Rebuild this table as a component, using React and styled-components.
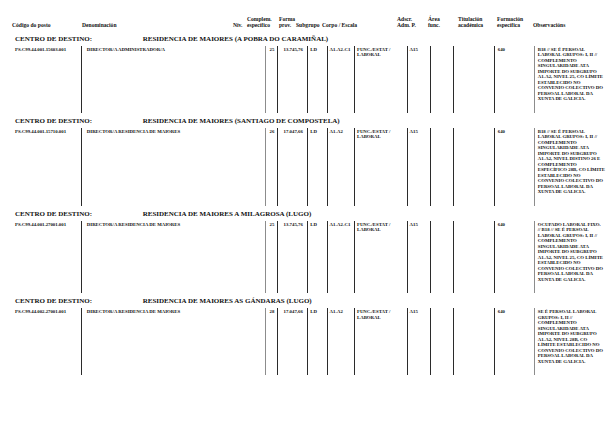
import React from "react";
import styled, { createGlobalStyle } from "styled-components";

const Global = createGlobalStyle`
  html, body { margin: 0; padding: 0; background: #fff; }
  body { font-family: "Liberation Serif", "Times New Roman", serif; color: #111; }
`;

const Page = styled.div`
  width: 615px;
  height: 439px;
  box-sizing: border-box;
  padding: 15.5px 8px 0 12px;
  overflow: hidden;
`;

const HeaderGrid = styled.div`
  display: grid;
  grid-template-columns: 70px 151px 14px 32px 17px 26px 75px 31px 30px 39px 36px 70px;
  align-items: end;
  font-size: 5.6px;
  font-weight: 700;
  line-height: 6px;
`;

const HeaderCell = styled.div`
  white-space: nowrap;
`;

const Section = styled.section`
  margin-left: 3px;
  margin-top: ${(p) => (p.$first ? "6px" : "3px")};
`;

const Heading = styled.div`
  display: flex;
  font-size: 7px;
  font-weight: 700;
  line-height: 10px;
  white-space: nowrap;
  margin-bottom: 2px;
`;

const HeadingLabel = styled.div`
  width: 127.7px;
`;

const Row = styled.div`
  display: grid;
  grid-template-columns: 66.3px 184px 12px 29.5px 20.2px 27.3px 52.7px 22.6px 23px 41px 40px 72px;
  font-size: 4.8px;
  font-weight: 700;
  line-height: 5.5px;
`;

const Cell = styled.div`
  box-sizing: border-box;
  border-left: ${(p) => (p.$line ? `1px solid ${p.$line}` : "none")};
  padding: 1px ${(p) => p.$padR ?? 0}px 11px ${(p) => p.$padL ?? 0}px;
  text-align: ${(p) => p.$align || "left"};
  white-space: pre;
`;

const DARK = "#2b2b2b";
const GRAY = "#8c8c8c";

const columns = [
  { key: "code", padL: 0 },
  { key: "denom", padL: 4.5, line: DARK },
  { key: "niv", align: "right", padR: 3, line: GRAY },
  { key: "complem", align: "right", padR: 4, line: DARK },
  { key: "forma", padL: 2.5, line: DARK },
  { key: "subgrupo", padL: 1.6, line: DARK },
  { key: "corpo", padL: 1.7, line: DARK },
  { key: "adscr", padL: 1.6, line: DARK },
  { key: "area", padL: 1.6, line: DARK },
  { key: "titul", padL: 1.6, line: DARK },
  { key: "formacion", padL: 3.2, line: DARK },
  { key: "obs", padL: 3.2, line: GRAY },
];

const headers = [
  ["", "Código do posto"],
  ["", "Denominación"],
  ["", "Nív."],
  ["Complem.", "específico"],
  ["Forma", "prov."],
  ["", "Subgrupo"],
  ["", "Corpo / Escala"],
  ["Adscr.", "Adm. P."],
  ["Área", "func."],
  ["Titulación", "académica"],
  ["Formación", "específica"],
  ["", "Observacións"],
];

const corpo = "FUNC./ESTAT /\nLABORAL";

const sections = [
  {
    name: "RESIDENCIA DE MAIORES (A POBRA DO CARAMIÑAL)",
    code: "PS.C99.44.001.15603.001",
    denom: "DIRECTOR/A ADMINISTRADOR/A",
    niv: "25",
    complem: "13.745,76",
    forma: "LD",
    subgrupo: "A1-A2-C1",
    corpo,
    adscr: "A15",
    area: "",
    titul: "",
    formacion: "640",
    obs: [
      "B18 // SE É PERSOAL",
      "LABORAL GRUPOS: I, II //",
      "COMPLEMENTO",
      "SINGULARIDADE ATA",
      "IMPORTE DO SUBGRUPO",
      "A1-A2, NIVEL 25, CO LÍMITE",
      "ESTABLECIDO NO",
      "CONVENIO COLECTIVO DO",
      "PERSOAL LABORAL DA",
      "XUNTA DE GALICIA.",
    ],
  },
  {
    name: "RESIDENCIA DE MAIORES (SANTIAGO DE COMPOSTELA)",
    code: "PS.C99.44.001.15710.001",
    denom: "DIRECTOR/A RESIDENCIA DE MAIORES",
    niv: "26",
    complem: "17.047,66",
    forma: "LD",
    subgrupo: "A1-A2",
    corpo,
    adscr: "A15",
    area: "",
    titul: "",
    formacion: "640",
    obs: [
      "B18 // SE É PERSOAL",
      "LABORAL GRUPOS: I, II //",
      "COMPLEMENTO",
      "SINGULARIDADE ATA",
      "IMPORTE DO SUBGRUPO",
      "A1-A2, NIVEL DISTINO 26 E",
      "COMPLEMENTO",
      "ESPECÍFICO 28B, CO LÍMITE",
      "ESTABLECIDO NO",
      "CONVENIO COLECTIVO DO",
      "PERSOAL LABORAL DA",
      "XUNTA DE GALICIA.",
    ],
  },
  {
    name: "RESIDENCIA DE MAIORES A MILAGROSA (LUGO)",
    code: "PS.C99.44.001.27001.001",
    denom: "DIRECTOR/A RESIDENCIA DE MAIORES",
    niv: "25",
    complem: "13.745,76",
    forma: "LD",
    subgrupo: "A1-A2-C1",
    corpo,
    adscr: "A15",
    area: "",
    titul: "",
    formacion: "640",
    obs: [
      "OCUPADO LABORAL FIXO.",
      "// B18 // SE É PERSOAL",
      "LABORAL GRUPOS: I, II //",
      "COMPLEMENTO",
      "SINGULARIDADE ATA",
      "IMPORTE DO SUBGRUPO",
      "A1-A2, NIVEL 25, CO LÍMITE",
      "ESTABLECIDO NO",
      "CONVENIO COLECTIVO DO",
      "PERSOAL LABORAL DA",
      "XUNTA DE GALICIA.",
    ],
  },
  {
    name: "RESIDENCIA DE MAIORES AS GÁNDARAS (LUGO)",
    code: "PS.C99.44.002.27001.001",
    denom: "DIRECTOR/A RESIDENCIA DE MAIORES",
    niv: "28",
    complem: "17.047,66",
    forma: "LD",
    subgrupo: "A1-A2",
    corpo,
    adscr: "A15",
    area: "",
    titul: "",
    formacion: "640",
    obs: [
      "SE É PERSOAL LABORAL",
      "GRUPOS: I, II //",
      "COMPLEMENTO",
      "SINGULARIDADE ATA",
      "IMPORTE DO SUBGRUPO",
      "A1-A2, NIVEL 28B, CO",
      "LÍMITE ESTABLECIDO NO",
      "CONVENIO COLECTIVO DO",
      "PERSOAL LABORAL DA",
      "XUNTA DE GALICIA.",
    ],
  },
];

export default function App() {
  return (
    <>
      <Global />
      <Page>
        <HeaderGrid>
          {headers.map(([a, b], i) => (
            <HeaderCell key={i}>
              {a && <div>{a}</div>}
              <div>{b}</div>
            </HeaderCell>
          ))}
        </HeaderGrid>
        {sections.map((s, i) => (
          <Section key={i} $first={i === 0}>
            <Heading>
              <HeadingLabel>CENTRO DE DESTINO:</HeadingLabel>
              <div>{s.name}</div>
            </Heading>
            <Row>
              {columns.map((c) => (
                <Cell
                  key={c.key}
                  $line={c.line}
                  $padL={c.padL}
                  $padR={c.padR}
                  $align={c.align}
                >
                  {c.key === "obs" ? s.obs.join("\n") : s[c.key]}
                </Cell>
              ))}
            </Row>
          </Section>
        ))}
      </Page>
    </>
  );
}
